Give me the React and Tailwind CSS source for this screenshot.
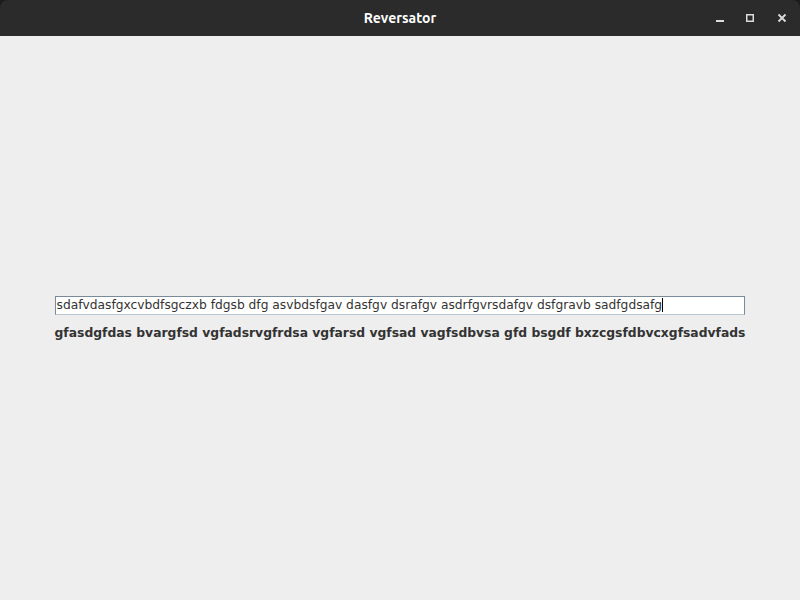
import React from 'react';

const App = () => {
  const input =
    'sdafvdasfgxcvbdfsgczxb fdgsb dfg asvbdsfgav dasfgv dsrafgv asdrfgvrsdafgv dsfgravb sadfgdsafg';
  const output =
    'gfasdgfdas bvargfsd vgfadsrvgfrdsa vgfarsd vgfsad vagfsdbvsa gfd bsgdf bxzcgsfdbvcxgfsadvfads';

  return (
    <div className="w-[800px] h-[600px] bg-[#1e1a1e] flex flex-col overflow-hidden">
      <div className="h-[36px] bg-[#2b2b2b] rounded-t-[8px] flex items-center relative shrink-0">
        <div className="flex-1 text-center text-white text-[14px] font-bold font-['Ubuntu','DejaVu_Sans',sans-serif]">
          Reversator
        </div>
        <div className="absolute right-0 top-0 h-[36px] flex items-center text-[#dcdcdc]">
          <div className="w-[32px] flex justify-center">
            <svg width="10" height="10" viewBox="0 0 10 10">
              <rect x="1" y="7" width="8" height="2" fill="currentColor" />
            </svg>
          </div>
          <div className="w-[28px] flex justify-center">
            <svg width="10" height="10" viewBox="0 0 10 10">
              <rect x="1.75" y="1.75" width="6.5" height="6.5" fill="none" stroke="currentColor" strokeWidth="1.5" />
            </svg>
          </div>
          <div className="w-[36px] flex justify-center">
            <svg width="10" height="10" viewBox="0 0 10 10">
              <path d="M1.5 1.5 L8.5 8.5 M8.5 1.5 L1.5 8.5" stroke="currentColor" strokeWidth="1.8" />
            </svg>
          </div>
        </div>
      </div>
      <div className="flex-1 bg-[#eeeeee] flex items-center justify-center">
        <div className="flex flex-col gap-[10px] font-['DejaVu_Sans',sans-serif]">
          <div className="h-[19px] bg-white border border-[#7a8a99] border-b-[#b8c4cf] flex items-center px-[1px] text-[12.25px] text-[#333333] whitespace-nowrap overflow-hidden">
            <span>{input}</span>
            <span className="w-px h-[14px] bg-black" />
          </div>
          <div className="text-[12.35px] font-bold text-[#333333] whitespace-nowrap leading-[16px]">
            {output}
          </div>
        </div>
      </div>
    </div>
  );
};

export default App;
